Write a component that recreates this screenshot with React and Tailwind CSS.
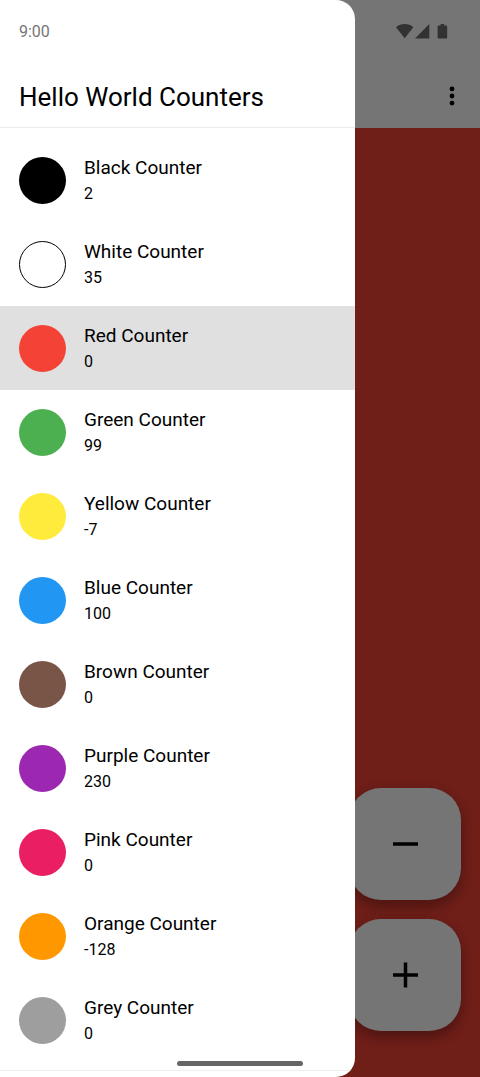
const counters = [
  { name: "Black Counter", value: 2, swatch: "bg-black" },
  { name: "White Counter", value: 35, swatch: "bg-white border border-black" },
  { name: "Red Counter", value: 0, swatch: "bg-[#f44336]", selected: true },
  { name: "Green Counter", value: 99, swatch: "bg-[#4caf50]" },
  { name: "Yellow Counter", value: -7, swatch: "bg-[#ffeb3b]" },
  { name: "Blue Counter", value: 100, swatch: "bg-[#2196f3]" },
  { name: "Brown Counter", value: 0, swatch: "bg-[#795548]" },
  { name: "Purple Counter", value: 230, swatch: "bg-[#9c27b0]" },
  { name: "Pink Counter", value: 0, swatch: "bg-[#e91e63]" },
  { name: "Orange Counter", value: -128, swatch: "bg-[#ff9800]" },
  { name: "Grey Counter", value: 0, swatch: "bg-[#9e9e9e]" },
];

function StatusIcons() {
  return (
    <svg
      className="h-4 w-[52px] fill-[#6e6e6e]"
      viewBox="0 0 52 16"
      aria-hidden="true"
    >
      <path d="M0 4.2C2.3 2 5.300 1 8.700 1s6.400 1 8.700 3.200L8.700 15.200z" />
      <path d="M33.300 1v14.500H19z" />
      <path d="M44.600 1h3.600v1.400h1.700c.8 0 1.300.5 1.300 1.300v10.500c0 .8-.5 1.300-1.300 1.300h-7c-.8 0-1.300-.5-1.300-1.300V3.700c0-.8.5-1.300 1.300-1.300h1.700z" />
    </svg>
  );
}

function CounterButton({ label, path }) {
  return (
    <button
      type="button"
      aria-label={label}
      className="flex size-28 items-center justify-center rounded-[32px] bg-white shadow-[0_7px_12px_rgba(0,0,0,0.24),0_1px_20px_rgba(0,0,0,0.12)]"
    >
      <svg className="size-[42px]" viewBox="0 0 42 42" aria-hidden="true">
        <path d={path} stroke="black" strokeWidth="3.500" fill="none" />
      </svg>
    </button>
  );
}

function CounterScreen() {
  return (
    <div className="flex min-h-screen flex-col bg-[#f44336]">
      <header className="bg-white">
        <div className="flex h-16 items-center justify-end pr-8 pb-0.5">
          <StatusIcons />
        </div>
        <div className="flex h-16 items-center justify-end pr-2">
          <button
            type="button"
            aria-label="More options"
            className="flex size-10 items-center justify-center"
          >
            <svg className="size-7" viewBox="0 0 28 28" aria-hidden="true">
              <circle cx="14" cy="6.900" r="2.400" />
              <circle cx="14" cy="14" r="2.400" />
              <circle cx="14" cy="21.100" r="2.400" />
            </svg>
          </button>
        </div>
      </header>
      <main className="flex flex-1 flex-col items-end justify-end gap-[19px] pr-[19px] pb-[46px]">
        <CounterButton label="Decrease" path="M9 21h25" />
        <CounterButton label="Increase" path="M9 21h25M21.500 8.500v25" />
      </main>
    </div>
  );
}

function CounterRow({ counter }) {
  return (
    <li>
      <button
        type="button"
        aria-current={counter.selected ? "true" : undefined}
        className={`flex h-21 w-full items-center gap-[18px] px-[19px] text-left ${
          counter.selected ? "bg-[#e0e0e0]" : ""
        }`}
      >
        <span className={`size-[47px] shrink-0 rounded-full ${counter.swatch}`} />
        <span className="flex flex-col">
          <span className="text-[19px] leading-7">{counter.name}</span>
          <span className="text-base leading-6">{counter.value}</span>
        </span>
      </button>
    </li>
  );
}

function Drawer() {
  return (
    <aside className="absolute inset-y-0 left-0 w-[355px] max-w-full overflow-hidden rounded-r-[19px] bg-white">
      <div className="flex h-16 items-center px-[19px] text-base text-[#757575]">
        9:00
      </div>
      <h1 className="flex h-16 items-center border-b border-[#ebebeb] px-[19px] pt-1 text-[26px]">
        Hello World Counters
      </h1>
      <nav aria-label="Counters">
        <ul className="border-b border-[#f0f0f0] pt-[10px] pb-2">
          {counters.map((counter) => (
            <CounterRow key={counter.name} counter={counter} />
          ))}
        </ul>
      </nav>
    </aside>
  );
}

export default function App() {
  return (
    <div className="relative min-h-screen overflow-hidden font-[Roboto,sans-serif] text-black">
      <CounterScreen />
      <div className="absolute inset-0 bg-black/54" />
      <Drawer />
      <div className="absolute inset-x-0 bottom-[11px] mx-auto h-[5px] w-[126px] rounded-full bg-[#666666]" />
    </div>
  );
}
